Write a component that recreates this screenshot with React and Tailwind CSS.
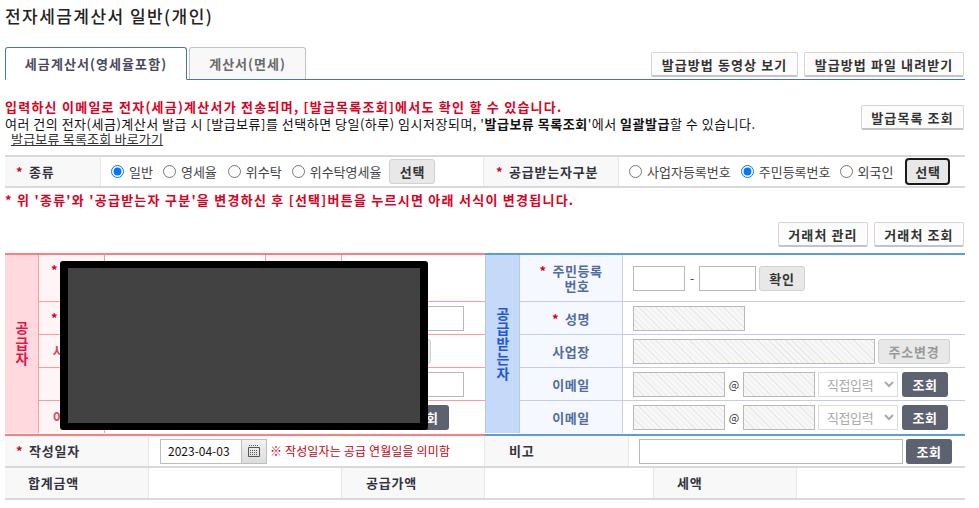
const font = "font-['Noto_Sans_CJK_KR','Liberation_Sans',sans-serif]";

function Btn({ children, className = "" }) {
  return (
    <button className={"shrink-0 h-[25px] rounded-[2px] border border-[#d4d4d4] border-b-2 border-b-[#c4c4c4] bg-[#fcfcfc] text-[13px] font-semibold text-[#333] tracking-[1.1px] leading-none " + className}>
      {children}
    </button>
  );
}

function Gray({ children, className = "", color = "text-[#333]", frame = "h-[25px] rounded-[3px] border border-[#d2d2d2]" }) {
  return (
    <button className={"shrink-0 bg-[#e8e8e8] text-[13px] font-semibold tracking-[0.8px] leading-none " + frame + " " + color + " " + className}>
      {children}
    </button>
  );
}

function Dark({ children = "조회", className = "" }) {
  return (
    <button className={"shrink-0 w-[46px] h-[25px] rounded-[3px] bg-[#5d6271] text-[13px] font-semibold text-white tracking-[0.6px] leading-none " + className}>
      {children}
    </button>
  );
}

function Star() {
  return <span className="inline-block w-[6px] mr-[7px] text-[#d0021b] font-bold">*</span>;
}

function Radio({ label, checked, name }) {
  return (
    <label className="flex items-center gap-[5px] text-[13px] text-[#444] whitespace-nowrap">
      <input type="radio" name={name} defaultChecked={checked} className="m-0 w-[13px] h-[13px]" />
      {label}
    </label>
  );
}

function Box({ className = "" }) {
  return <div className={"h-[25px] shrink-0 border border-[#b9b9b9] bg-white " + className} />;
}

function Hatch({ className = "" }) {
  return (
    <div className={"h-[25px] shrink-0 border border-[#b9b9b9] bg-[repeating-linear-gradient(45deg,#f7f7f7_0,#f7f7f7_3px,#e9e9e9_3px,#e9e9e9_4px)] " + className} />
  );
}

function Sel() {
  return (
    <select disabled defaultValue="d" className={"shrink-0 w-[80px] h-[25px] border border-[#dcdcdc] bg-white text-[13px] text-[#aaa] tracking-[-0.4px] pl-[4px] " + font}>
      <option value="d">직접입력</option>
    </select>
  );
}

function LCell({ children, className = "" }) {
  return (
    <div className={"flex items-center justify-center bg-[#fff5f6] border-b border-[#ff9a9a] border-r text-[13px] font-semibold text-[#d9475a] tracking-[0.5px] " + className}>
      {children}
    </div>
  );
}

function RLabel({ children, className = "" }) {
  return (
    <div className={"flex items-center justify-center text-center bg-[#f6f8ff] border-b border-r border-[#c6cce2] text-[13px] leading-[15px] font-semibold text-[#4f6da0] tracking-[0.5px] " + className}>
      <span>{children}</span>
    </div>
  );
}

function RTd({ children, className = "" }) {
  return <div className={"flex items-center pl-[10px] border-b border-[#c6cce2] " + className}>{children}</div>;
}

function Th({ children, className = "" }) {
  return (
    <div className={"flex items-center bg-[#f8f8f8] text-[13px] font-semibold text-[#33333f] tracking-[0.8px] " + className}>
      {children}
    </div>
  );
}

function EmailCells({ last }) {
  return (
    <RTd className={last ? "border-b-0" : ""}>
      <Hatch className="w-[92px]" />
      <span className="w-[18px] text-center text-[11px] text-[#333]">@</span>
      <Hatch className="w-[72px]" />
      <div className="w-[3px]" />
      <Sel />
      <div className="w-[4px]" />
      <Dark />
    </RTd>
  );
}

export default function App() {
  return (
    <div className={"w-[979px] h-[508px] overflow-hidden bg-white pl-[5px] pr-[14px] " + font}>
      <h1 className="h-[47px] pt-[4px] text-[17px] leading-[24px] font-medium tracking-[1.45px] text-[#222]">
        전자세금계산서 일반(개인)
      </h1>

      <div className="flex items-end h-[33px] border-b border-[#4a74ad]">
        <div className="relative -mb-px w-[182px] h-[33px] flex items-center justify-center rounded-t-[3px] border border-[#4a74ad] border-b-white bg-white text-[13px] font-semibold text-[#4a4a5c] tracking-[1.08px]">
          세금계산서(영세율포함)
        </div>
        <div className="ml-[2px] w-[117px] h-[32px] flex items-center justify-center rounded-t-[3px] border border-b-0 border-[#c4c4c4] bg-[#f8f8f8] text-[13px] font-semibold text-[#6a6a6a] tracking-[1px]">
          계산서(면세)
        </div>
        <div className="flex-1" />
        <Btn className="w-[147px] mb-[2px]">발급방법 동영상 보기</Btn>
        <Btn className="w-[160px] ml-[6px] mb-[2px] mr-px">발급방법 파일 내려받기</Btn>
      </div>

      <div className="flex justify-between h-[75px] pt-[18px]">
        <div className="text-[13px] text-[#111] leading-[16px]">
          <p className="font-bold text-[#dd0022] tracking-[1.24px] leading-[18px]">
            입력하신 이메일로 전자(세금)계산서가 전송되며, [발급목록조회]에서도 확인 할 수 있습니다.
          </p>
          <p className="tracking-[0.5px] whitespace-nowrap">
            여러 건의 전자(세금)계산서 발급 시 [발급보류]를 선택하면 당일(하루) 임시저장되며, '<b>발급보류 목록조회</b>'에서 <b>일괄발급</b>할 수 있습니다.
          </p>
          <p className="ml-[6px] leading-[14px] underline tracking-[0.2px] text-[#333]">발급보류 목록조회 바로가기</p>
        </div>
        <Btn className="w-[103px] mr-px mt-[7px]">발급목록 조회</Btn>
      </div>

      <div className="flex h-[33px] border-y-2 border-[#d8d8d8] -mb-px">
        <Th className="w-[96px] pl-[11px] border-r border-[#e8e8e8]"><Star />종류</Th>
        <div className="w-[383px] flex items-center pl-[10px] border-r border-[#e8e8e8]">
          <Radio name="a" label="일반" checked />
          <div className="w-[10px]" />
          <Radio name="a" label="영세율" />
          <div className="w-[11px]" />
          <Radio name="a" label="위수탁" />
          <div className="w-[10px]" />
          <Radio name="a" label="위수탁영세율" />
          <Gray className="ml-[8px] w-[46px]">선택</Gray>
        </div>
        <Th className="w-[135px] pl-[12px] border-r border-[#e8e8e8]"><Star />공급받는자구분</Th>
        <div className="flex-1 flex items-center pl-[10px]">
          <Radio name="b" label="사업자등록번호" />
          <div className="w-[10px]" />
          <Radio name="b" label="주민등록번호" checked />
          <div className="w-[9px]" />
          <Radio name="b" label="외국인" />
          <Gray className="ml-[12px] w-[45px]" frame="h-[27px] rounded-[4px] border-2 border-[#1a1a1a]">선택</Gray>
        </div>
      </div>

      <p className="h-[35px] pt-[5px] text-[13px] leading-[16px] font-bold text-[#dd0022] tracking-[1.25px] whitespace-nowrap">
        * 위 '종류'와 '공급받는자 구분'을 변경하신 후 [선택]버튼을 누르시면 아래 서식이 변경됩니다.
      </p>

      <div className="flex justify-end h-[31px]">
        <Btn className="w-[90px]">거래처 관리</Btn>
        <Btn className="w-[90px] ml-[6px] mr-px">거래처 조회</Btn>
      </div>

      <div className="relative flex h-[183px]">
        <div className="w-[480px] grid grid-cols-[34px_66px_161px_76px_143px] grid-rows-[47px_33px_33px_33px_32px] border-y-2 border-[#ff7d7d]">
          <div className="row-span-5 flex items-center justify-center bg-[#ffd9dd] border-r border-[#ff9a9a] text-[14px] font-semibold text-[#ee1144]">
            <span className="[writing-mode:vertical-rl] [text-orientation:upright] tracking-[1.5px]">공급자</span>
          </div>
          <LCell className="justify-start pl-[12px] items-start pt-[5px]"><Star />등록번호</LCell>
          <div className="border-b border-r border-[#ff9a9a]" />
          <LCell>종사업장</LCell>
          <div className="border-b border-[#ff9a9a]" />

          <LCell className="justify-start pl-[12px]"><Star />상호</LCell>
          <div className="border-b border-r border-[#ff9a9a]" />
          <LCell>성명</LCell>
          <div className="flex items-center justify-end pr-[21px] border-b border-[#ff9a9a]"><Box className="w-[100px]" /></div>

          <LCell>사업장</LCell>
          <div className="col-span-3 flex items-center pl-[266px] border-b border-[#ff9a9a]">
            <Gray className="w-[60px]">변경</Gray>
          </div>

          <LCell className="pl-[2px]">업태</LCell>
          <div className="border-b border-r border-[#ff9a9a]" />
          <LCell>종목</LCell>
          <div className="flex items-center justify-end pr-[21px] border-b border-[#ff9a9a]"><Box className="w-[100px]" /></div>

          <LCell className="border-b-0">이메일</LCell>
          <div className="col-span-3 flex items-center justify-end pr-[36px]"><Dark /></div>
        </div>

        <div className="flex-1 grid grid-cols-[35px_103px_1fr] grid-rows-[47px_33px_33px_33px_32px] border-y-2 border-[#5b9be0]">
          <div className="row-span-5 flex items-center justify-center bg-[#c4daf8] border-l border-r border-[#b4c9ea] text-[14px] font-semibold text-[#2356d8]">
            <span className="[writing-mode:vertical-rl] [text-orientation:upright] tracking-[1px]">공급받는자</span>
          </div>
          <RLabel><Star />주민등록<br /><span className="inline-block pl-[12px]">번호</span></RLabel>
          <RTd>
            <Box className="w-[52px]" />
            <span className="w-[14px] text-center text-[12px] text-[#333]">-</span>
            <Box className="w-[57px]" />
            <Gray className="ml-[3px] w-[46px]">확인</Gray>
          </RTd>
          <RLabel><Star />성명</RLabel>
          <RTd><Hatch className="w-[112px]" /></RTd>
          <RLabel>사업장</RLabel>
          <RTd>
            <Hatch className="w-[242px]" />
            <Gray className="ml-[3px] w-[72px]" color="text-[#999]">주소변경</Gray>
          </RTd>
          <RLabel>이메일</RLabel>
          <EmailCells />
          <RLabel className="border-b-0">이메일</RLabel>
          <EmailCells last />
        </div>

        <div className="absolute left-[55px] top-[8px] w-[368px] h-[169px] rounded-[3px] border-x-[8px] border-y-[7px] border-black bg-[#424242]" />
      </div>

      <div className="flex h-[32px] border-b-2 border-[#d8d8d8]">
        <Th className="w-[144px] pl-[11px] border-r border-[#e8e8e8]"><Star />작성일자</Th>
        <div className="w-[335px] flex items-center pl-[11px]">
          <div className="w-[82px] h-[25px] flex items-center pl-[7px] border border-[#bdbdbd] text-[12px] text-[#111]">2023-04-03</div>
          <div className="w-[25px] h-[25px] flex items-center justify-center border border-l-0 border-[#bdbdbd] bg-[linear-gradient(#f2f2f2,#dcdcdc)]">
            <svg width="12" height="12" viewBox="0 0 12 12" fill="none" stroke="#555">
              <path d="M1 .5h1M3 .5h1M5 .5h1M7 .5h1M9 .5h1M.5 2.5h11v9H.5z" />
              <path d="M2 5.5h8M2 7.5h8M2 9.5h8" strokeDasharray="1 1" />
            </svg>
          </div>
          <span className="ml-[3px] text-[12px] text-[#cc0011] whitespace-nowrap tracking-[0.15px]">※ 작성일자는 공급 연월일을 의미함</span>
        </div>
        <Th className="w-[145px] pl-[24px] border-x border-[#e8e8e8]">비고</Th>
        <div className="flex-1 flex items-center pl-[10px]">
          <Box className="w-[264px]" />
          <Dark className="ml-[3px]" />
        </div>
      </div>

      <div className="flex h-[32px] border-b-2 border-[#d8d8d8]">
        <Th className="w-[144px] pl-[23px] border-r border-[#e8e8e8]">합계금액</Th>
        <div className="w-[192px]" />
        <Th className="w-[144px] pl-[24px] border-x border-[#e8e8e8]">공급가액</Th>
        <div className="w-[168px]" />
        <Th className="w-[144px] pl-[23px] border-x border-[#e8e8e8]">세액</Th>
      </div>
    </div>
  );
}
